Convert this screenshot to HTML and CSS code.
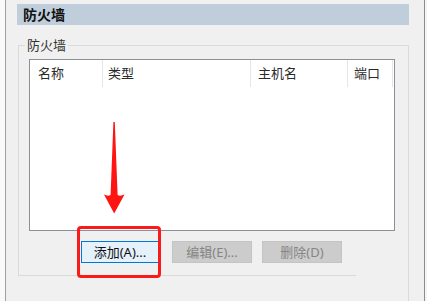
FILE: index.html
```html
<!DOCTYPE html>
<html lang="zh-CN">
<head>
<meta charset="utf-8">
<title>防火墙</title>
<link rel="stylesheet" href="styles.css">
</head>
<body>
<div class="frame">
  <div class="left-strip"></div>
  <div class="main">
    <div class="section-head">防火墙</div>
    <div class="gb-wrap">
      <div class="gb">
        <span class="legend">防火墙</span>
        <div class="listbox">
          <div class="cols">
            <div class="col c1">名称</div>
            <div class="col c2">类型</div>
            <div class="col c3">主机名</div>
            <div class="col c4">端口</div>
          </div>
        </div>
        <div class="btn-row">
          <div class="btn-hl">
            <button class="btn btn-add">添加(A)...</button>
            <span class="redbox"></span>
          </div>
          <button class="btn btn-off btn-edit">编辑(E)...</button>
          <button class="btn btn-off btn-del">删除(D)</button>
        </div>
        <svg class="arrow" width="22" height="94" viewBox="0 0 22 94">
          <path d="M9.4 1 L10.8 1 L13.6 74 Q16 75.5 20.5 73.5 L10.2 92.5 L0 73.5 Q4 75.5 6.6 74 Z" fill="#ff1414"/>
        </svg>
      </div>
      <div class="gb-bottom"></div>
    </div>
  </div>
  <div class="right-strip"></div>
</div>
</body>
</html>
```
FILE: styles.css
```css
html, body {
  margin: 0;
  padding: 0;
}
body {
  width: 427px;
  height: 301px;
  overflow: hidden;
  background: #f0f0f0;
  font-family: "Noto Sans", "Noto Sans CJK SC", sans-serif;
  font-size: 13px;
  color: #1e1e1e;
}
.frame {
  display: flex;
  height: 301px;
}
.left-strip {
  width: 5px;
  background: #fafafa;
  border-right: 1px solid #a0a0a0;
}
.main {
  width: 418px;
  display: flex;
  flex-direction: column;
}
.right-strip {
  width: 2px;
  border-left: 1px solid #8c8c8c;
  background: #f4f4f4;
}
.section-head {
  margin: 4px 0 0 11px;
  width: 386px;
  height: 21px;
  padding-left: 6px;
  background: #c0cedc;
  font-weight: bold;
  font-size: 14px;
  line-height: 21px;
  color: #111;
}
.gb-wrap {
  margin: 20px 0 0 12px;
  width: 390px;
  flex: 1;
  border-right: 1px solid #dadada;
  display: flex;
  flex-direction: column;
}
.gb {
  position: relative;
  border-top: 1px solid #dadada;
  border-left: 1px solid #dadada;
  padding: 13px 0 12px 10px;
}
.legend {
  position: absolute;
  left: 6px;
  top: -9px;
  padding: 0 2px;
  background: #f0f0f0;
  line-height: 16px;
  color: #333;
}
.gb-bottom {
  width: 338px;
  border-top: 1px solid #dadada;
}
.listbox {
  width: 364px;
  height: 170px;
  background: #fff;
  border: 1px solid #8a8f98;
}
.cols {
  display: flex;
  height: 27px;
}
.col {
  border-right: 1px solid #e6e6e6;
  line-height: 27px;
  padding-left: 6px;
  color: #2a2a2a;
  box-sizing: border-box;
}
.c1 { width: 73px; padding-left: 8px; }
.c2 { width: 148px; padding-left: 5px; }
.c3 { width: 97px; padding-left: 7px; }
.c4 { width: 45px; }
.btn-row {
  display: flex;
  margin-top: 10px;
  padding-left: 52px;
}
.btn-hl {
  position: relative;
}
.btn {
  height: 22px;
  margin: 0;
  padding: 0;
  font-family: inherit;
  font-size: 13px;
  line-height: 20px;
  text-align: center;
  box-sizing: border-box;
}
.btn-add {
  width: 78px;
  background: #e5f1fb;
  border: 1px solid #0078d7;
  color: #111;
}
.btn-off {
  width: 80px;
  background: #cccccc;
  border: 1px solid #c4c4c4;
  color: #858585;
}
.btn-edit { margin-left: 13px; }
.btn-del { margin-left: 10px; }
.redbox {
  position: absolute;
  left: -4px;
  top: -15px;
  width: 78px;
  height: 46px;
  border: 3px solid #f91a1a;
  border-radius: 4px;
}
.arrow {
  position: absolute;
  left: 85px;
  top: 75px;
}
```
